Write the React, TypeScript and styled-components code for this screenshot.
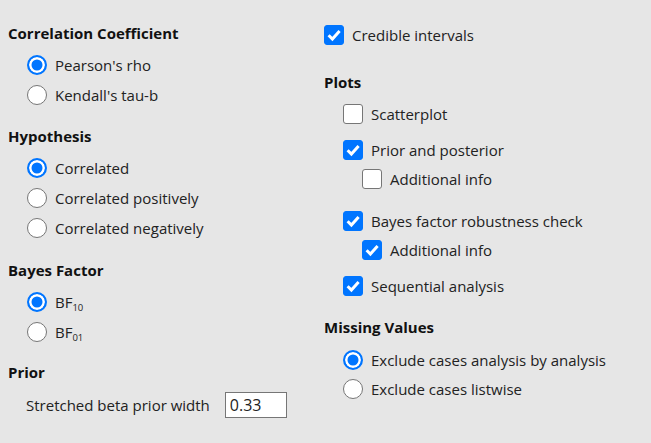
import * as React from 'react'
import styled, { createGlobalStyle } from 'styled-components'

const ACCENT = '#0075ff'
const BORDER = '#767676'

const GlobalStyle = createGlobalStyle`
	html, body {
		margin: 0;
		padding: 0;
		background: #e6e6e6;
	}
	body {
		font-family: 'Open Sans', 'Noto Sans', sans-serif;
		font-size: 15px;
		color: #222;
	}
`

const Page = styled.div`
	display: grid;
	grid-template-columns: 316px 1fr;
	width: 651px;
	height: 443px;
	box-sizing: border-box;
	padding-left: 8px;
	overflow: hidden;
`

const Column = styled.div<{ $top: number }>`
	display: flex;
	flex-direction: column;
	padding-top: ${(p) => p.$top}px;
`

const Section = styled.section<{ $after?: number }>`
	display: flex;
	flex-direction: column;
	margin-bottom: ${(p) => p.$after ?? 0}px;
`

const Heading = styled.h2<{ $below?: number }>`
	margin: 0 0 ${(p) => p.$below ?? 7}px;
	height: 20px;
	line-height: 20px;
	font-size: 15px;
	font-weight: 700;
	color: #111;
`

const Row = styled.label<{ $indent?: number; $h?: number; $after?: number }>`
	display: flex;
	align-items: center;
	gap: 8px;
	height: ${(p) => p.$h ?? 30}px;
	padding-left: ${(p) => p.$indent ?? 0}px;
	margin-bottom: ${(p) => p.$after ?? 0}px;
	white-space: nowrap;
`

const RadioDot = styled.span<{ $on?: boolean }>`
	flex: none;
	box-sizing: border-box;
	width: 20px;
	height: 20px;
	border-radius: 50%;
	background: ${(p) => (p.$on ? ACCENT : '#fff')};
	border: ${(p) => (p.$on ? `2px solid ${ACCENT}` : `1px solid ${BORDER}`)};
	box-shadow: ${(p) => (p.$on ? 'inset 0 0 0 2.5px #fff' : 'none')};
`

const Box = styled.span<{ $on?: boolean }>`
	flex: none;
	box-sizing: border-box;
	display: flex;
	align-items: center;
	justify-content: center;
	width: 20px;
	height: 20px;
	border-radius: 3px;
	background: ${(p) => (p.$on ? ACCENT : '#fff')};
	border: 1px solid ${(p) => (p.$on ? ACCENT : BORDER)};
`

const Sub = styled.sub`
	font-size: 9.5px;
	vertical-align: -3px;
	line-height: 0;
`

const FieldRow = styled.label`
	display: flex;
	align-items: center;
	gap: 15px;
	height: 26px;
	padding-left: 18px;
	white-space: nowrap;
`

const NumberField = styled.input`
	box-sizing: border-box;
	width: 62px;
	height: 26px;
	padding: 0 4px;
	border: 1px solid ${BORDER};
	border-radius: 0;
	background: #fff;
	font: inherit;
	font-size: 16px;
	color: #222;
	outline: none;
`

const Check = () => (
	<svg width="18" height="18" viewBox="1 1 18 18">
		<polyline
			points="4.6,10.2 8.4,14 15.6,6"
			fill="none"
			stroke="#fff"
			strokeWidth="3"
			strokeLinejoin="miter"
		/>
	</svg>
)

type ItemProps = {
	on?: boolean
	indent?: number
	h?: number
	after?: number
	children: React.ReactNode
}

const Radio = ({ on, indent = 19, h, after, children }: ItemProps) => (
	<Row $indent={indent} $h={h} $after={after}>
		<RadioDot $on={on} />
		<span>{children}</span>
	</Row>
)

const Checkbox = ({ on, indent = 0, h = 29, after, children }: ItemProps) => (
	<Row $indent={indent} $h={h} $after={after}>
		<Box $on={on}>{on && <Check />}</Box>
		<span>{children}</span>
	</Row>
)

export default function App() {
	return (
		<>
			<GlobalStyle />
			<Page>
				<Column $top={23}>
					<Section $after={16}>
						<Heading>Correlation Coefficient</Heading>
						<Radio on>Pearson's rho</Radio>
						<Radio>Kendall's tau-b</Radio>
					</Section>
					<Section $after={17}>
						<Heading>Hypothesis</Heading>
						<Radio on>Correlated</Radio>
						<Radio>Correlated positively</Radio>
						<Radio>Correlated negatively</Radio>
					</Section>
					<Section $after={15}>
						<Heading>Bayes Factor</Heading>
						<Radio on>
							BF<Sub>10</Sub>
						</Radio>
						<Radio>
							BF<Sub>01</Sub>
						</Radio>
					</Section>
					<Section>
						<Heading $below={10}>Prior</Heading>
						<FieldRow>
							Stretched beta prior width
							<NumberField defaultValue="0.33" />
						</FieldRow>
					</Section>
				</Column>
				<Column $top={20}>
					<Section $after={22}>
						<Checkbox on h={30}>
							Credible intervals
						</Checkbox>
					</Section>
					<Section $after={17}>
						<Heading>Plots</Heading>
						<Checkbox indent={19} after={7}>
							Scatterplot
						</Checkbox>
						<Checkbox on indent={19}>
							Prior and posterior
						</Checkbox>
						<Checkbox indent={38} after={13}>
							Additional info
						</Checkbox>
						<Checkbox on indent={19}>
							Bayes factor robustness check
						</Checkbox>
						<Checkbox on indent={38} after={7}>
							Additional info
						</Checkbox>
						<Checkbox on indent={19}>
							Sequential analysis
						</Checkbox>
					</Section>
					<Section>
						<Heading $below={8}>Missing Values</Heading>
						<Radio on h={29}>
							Exclude cases analysis by analysis
						</Radio>
						<Radio h={29}>Exclude cases listwise</Radio>
					</Section>
				</Column>
			</Page>
		</>
	)
}
